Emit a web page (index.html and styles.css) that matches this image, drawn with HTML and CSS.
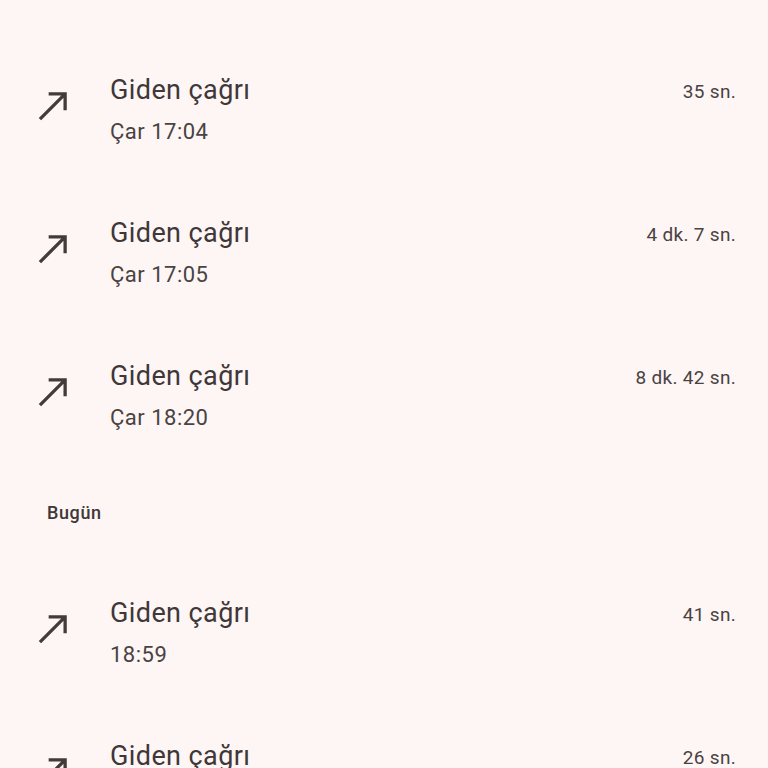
FILE: index.html
```html
<!DOCTYPE html>
<html lang="tr">
<head>
<meta charset="utf-8">
<link rel="stylesheet" href="styles.css">
</head>
<body>
<div class="list">
  <div class="row">
    <svg class="icon" viewBox="0 0 32 32"><path d="M2 30 L28 4 M11 4 H28 V21" fill="none" stroke="#433a3b" stroke-width="3.4"/></svg>
    <div class="text"><div class="title">Giden çağrı</div><div class="sub">Çar 17:04</div></div>
    <div class="dur">35 sn.</div>
  </div>
  <div class="row">
    <svg class="icon" viewBox="0 0 32 32"><path d="M2 30 L28 4 M11 4 H28 V21" fill="none" stroke="#433a3b" stroke-width="3.4"/></svg>
    <div class="text"><div class="title">Giden çağrı</div><div class="sub">Çar 17:05</div></div>
    <div class="dur">4 dk. 7 sn.</div>
  </div>
  <div class="row">
    <svg class="icon" viewBox="0 0 32 32"><path d="M2 30 L28 4 M11 4 H28 V21" fill="none" stroke="#433a3b" stroke-width="3.4"/></svg>
    <div class="text"><div class="title">Giden çağrı</div><div class="sub">Çar 18:20</div></div>
    <div class="dur">8 dk. 42 sn.</div>
  </div>
  <div class="header">Bugün</div>
  <div class="row">
    <svg class="icon" viewBox="0 0 32 32"><path d="M2 30 L28 4 M11 4 H28 V21" fill="none" stroke="#433a3b" stroke-width="3.4"/></svg>
    <div class="text"><div class="title">Giden çağrı</div><div class="sub">18:59</div></div>
    <div class="dur">41 sn.</div>
  </div>
  <div class="row">
    <svg class="icon" viewBox="0 0 32 32"><path d="M2 30 L28 4 M11 4 H28 V21" fill="none" stroke="#433a3b" stroke-width="3.4"/></svg>
    <div class="text"><div class="title">Giden çağrı</div></div>
    <div class="dur">26 sn.</div>
  </div>
</div>
</body>
</html>
```
FILE: styles.css
```css
html, body {
  margin: 0;
  padding: 0;
  background: #fdf6f4;
  height: 768px;
  overflow: hidden;
}
body {
  font-family: Roboto, "Noto Sans", sans-serif;
  color: #453d3e;
}
.list {
  padding-top: 39px;
}
.row {
  height: 143px;
  box-sizing: border-box;
  display: flex;
  align-items: flex-start;
  padding: 34px 32px 0 38px;
}
.icon {
  width: 31px;
  height: 31px;
  margin-top: 17px;
  flex: none;
}
.text {
  margin-left: 41px;
  flex: 1;
}
.title {
  font-size: 27px;
  line-height: 34px;
  letter-spacing: 0.4px;
  margin-bottom: 8px;
  color: #3f3738;
}
.sub {
  font-size: 22px;
  line-height: 34px;
  letter-spacing: 0.5px;
  color: #4a4243;
}
.dur {
  font-size: 19px;
  line-height: 34px;
  letter-spacing: 0.3px;
  margin-top: 2px;
  color: #4a4243;
}
.header {
  height: 94px;
  box-sizing: border-box;
  padding: 35px 0 0 47px;
  font-size: 18px;
  line-height: 20px;
  letter-spacing: 0.6px;
  font-weight: 500;
  color: #3f3738;
}
```
